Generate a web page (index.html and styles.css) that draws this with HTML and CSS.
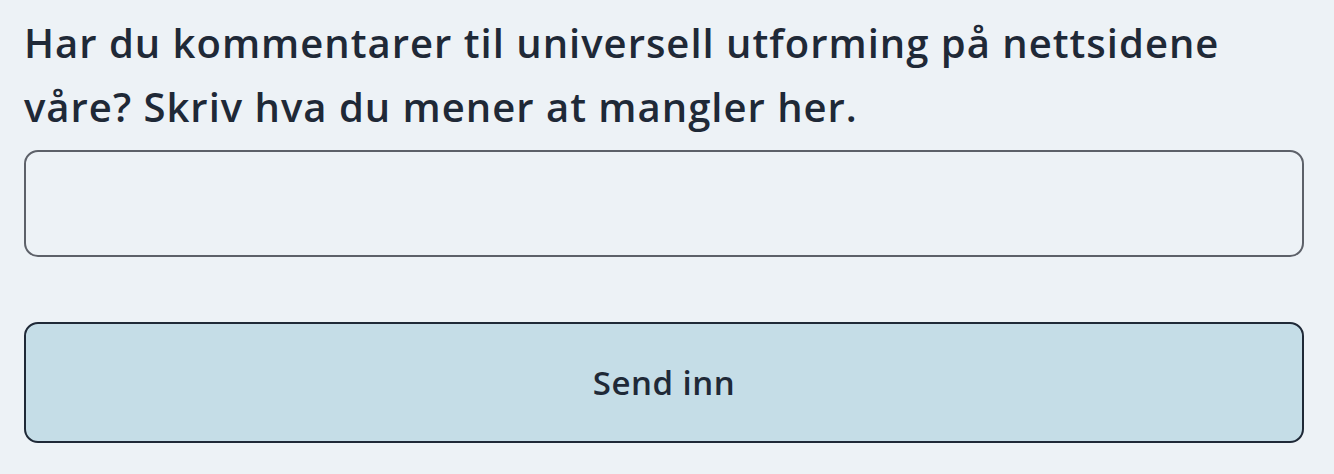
FILE: index.html
```html
<!DOCTYPE html>
<html lang="nb">
<head>
    <meta charset="UTF-8">
    <meta name="viewport" content="width=device-width, initial-scale=1.0">
    <title>Tilbakemelding</title>
    <link rel="stylesheet" href="styles.css">
</head>
<body>

    <form class="feedback" id="feedbackForm">
        <!-- Question and free text answer -->
        <label class="feedback-label" for="comment">Har du kommentarer til universell utforming på nettsidene våre? Skriv hva du mener at mangler her.</label>
        <input type="text" id="comment" name="comment" class="feedback-input">

        <button type="submit" class="feedback-submit">Send inn</button>
    </form>

</body>
</html>
```

FILE: styles.css
```css
/* Reset some default styles */
* {
    margin: 0;
    padding: 0;
    box-sizing: border-box;
}

body {
    font-family: 'Open Sans', 'Noto Sans', sans-serif;
    background-color: #edf2f6;
    color: #1f2937;
    padding: 11px 30px 0 24px;
}

.feedback {
    display: flex;
    flex-direction: column;
}

.feedback-label {
    font-size: 40px;
    font-weight: 600;
    line-height: 64px;
    letter-spacing: 1px;
    margin-bottom: 11px;
}

.feedback-input {
    height: 107px;
    padding: 0 20px;
    font-family: inherit;
    font-size: 32px;
    color: #1f2937;
    background-color: #edf2f6;
    border: 2px solid #5d6169;
    border-radius: 14px;
    outline: none;
}

.feedback-submit {
    margin-top: 65px;
    height: 121px;
    font-family: inherit;
    font-size: 33px;
    font-weight: 600;
    letter-spacing: 0.5px;
    color: #1f2937;
    background-color: #c5dde7;
    border: 2px solid #1f2937;
    border-radius: 14px;
    cursor: pointer;
}
```
